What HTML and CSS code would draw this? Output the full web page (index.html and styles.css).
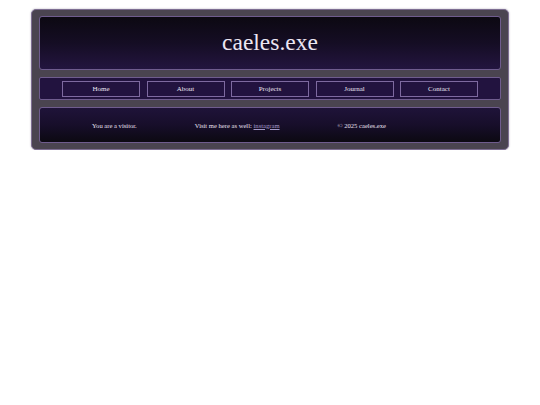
FILE: index.html
```html
<!DOCTYPE html>
<html>
<head>
<meta charset="utf-8">
<link rel="stylesheet" href="styles.css">
</head>
<body>
<div class="frame">
  <header class="header"><h1 class="title">caeles.exe</h1></header>
  <nav class="nav">
    <a class="btn" href="#">Home</a>
    <a class="btn" href="#">About</a>
    <a class="btn" href="#">Projects</a>
    <a class="btn" href="#">Journal</a>
    <a class="btn" href="#">Contact</a>
  </nav>
  <footer class="footer">
    <span>You are a visitor.</span>
    <span>Visit me here as well: <a class="link" href="#">instagram</a></span>
    <span>© 2025 caeles.exe</span>
  </footer>
</div>
</body>
</html>
```
FILE: styles.css
```css
html, body { margin: 0; padding: 0; background: #fff; }
body { padding-top: 9px; font-family: "Liberation Serif", "Times New Roman", serif; }
.frame {
  width: 462px;
  margin: 0 auto;
  background: #4a4450;
  border: 1px solid #7d6e92;
  border-radius: 5px;
  padding: 6px 7px;
  display: flex;
  flex-direction: column;
  gap: 7px;
  box-shadow: 0 0 2px rgba(60,40,80,0.4);
}
.header {
  height: 52px;
  border: 1px solid #6f5c8e;
  border-radius: 3px;
  background: linear-gradient(to bottom, #0c0912 0%, #150d24 50%, #23153f 100%);
  display: flex;
  align-items: center;
  justify-content: center;
}
.title {
  margin: 0;
  font-weight: normal;
  font-size: 23.5px;
  color: #ece6f2;
  line-height: 1;
}
.nav {
  height: 21px;
  border: 1px solid #6f5c8e;
  border-radius: 2px;
  background: #22133f;
  display: flex;
  align-items: center;
  gap: 6.5px;
  padding: 0 22px;
}
.btn {
  flex: 1;
  height: 14px;
  border: 1px solid #7e6aa0;
  display: flex;
  align-items: center;
  justify-content: center;
  color: #ece6f4;
  font-size: 7px;
  text-decoration: none;
}
.footer {
  height: 34px;
  border: 1px solid #6f5c8e;
  border-radius: 3px;
  background: linear-gradient(to bottom, #1f1339 0%, #170e2a 50%, #0c0912 100%);
  display: flex;
  align-items: center;
  gap: 58px;
  padding-left: 52px;
  color: #e8e0f0;
  font-size: 6.6px;
}
.link { color: #a49ac8; text-decoration: underline; }
```
